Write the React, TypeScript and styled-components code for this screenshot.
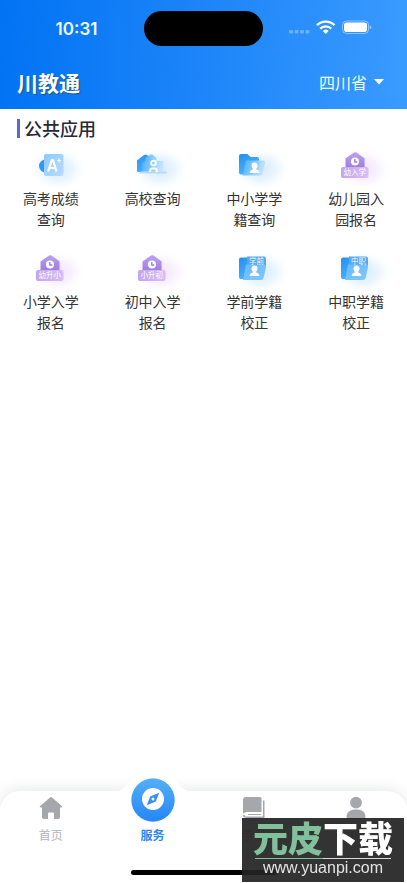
import React from "react";
import styled, { createGlobalStyle, css } from "styled-components";

const Global = createGlobalStyle`
  * { box-sizing: border-box; }
  body { margin: 0; background: #fff; font-family: "Inter", "Noto Sans CJK SC", sans-serif; }
  button, a { font: inherit; }
`;

const Screen = styled.div`
  min-height: 100vh;
  display: flex;
  flex-direction: column;
  background: #fff;
`;

const Header = styled.header`
  background: linear-gradient(93deg, #0273f4 0%, #1a83f8 45%, #3a9bff 100%);
  color: #fff;
`;

const StatusBar = styled.div`
  display: grid;
  grid-template-columns: 1fr 119px 1fr;
  align-items: center;
  padding-top: 11px;
  height: 46px;
`;

const Clock = styled.time`
  text-align: center;
  padding-left: 9px;
  font: 600 17px/24px "Inter", sans-serif;
  color: #eefaff;
`;

const Island = styled.div`
  height: 35px;
  border-radius: 18px;
  background: #000;
`;

const StatusIcons = styled.svg`
  justify-self: end;
  margin: 0 35px 4px 0;
  display: block;
`;

const TitleBar = styled.div`
  display: flex;
  align-items: center;
  justify-content: space-between;
  height: 63px;
  padding: 8px 23px 0 17px;
`;

const Brand = styled.h1`
  margin: 0;
  font: 700 21px/30px "Kaiti SC", "STKaiti", "Noto Sans CJK SC", serif;
  text-shadow: 1px 1px 1px #26527c;
`;

const Region = styled.button`
  display: flex;
  align-items: center;
  gap: 7px;
  padding: 0;
  border: 0;
  background: none;
  color: #f0fbff;
  font-family: "Noto Sans CJK SC", sans-serif;
  font-size: 16px;
  line-height: 24px;
  font-weight: 400;
`;

const Main = styled.main`
  flex: 1;
  padding-top: 7px;
`;

const SectionTitle = styled.h2`
  display: flex;
  align-items: center;
  gap: 4px;
  margin: 0 17px 5px;
  font: 500 18px/24px "Noto Sans CJK SC", sans-serif;
  color: #262a36;
  &::before {
    content: "";
    width: 3px;
    height: 19px;
    background: #5a68d6;
  }
`;

const AppGrid = styled.div`
  display: grid;
  grid-template-columns: repeat(4, 1fr);
  row-gap: 18px;
`;

const AppLink = styled.a`
  display: flex;
  flex-direction: column;
  align-items: center;
  gap: 3px;
  color: #333;
  text-decoration: none;
`;

const AppLabel = styled.span`
  width: 58px;
  text-align: center;
  font: 400 14px/21px "Noto Sans CJK SC", sans-serif;
`;

const AppIcon = styled.svg`
  display: block;
  width: 60px;
  height: 40px;
  overflow: visible;
`;

const TabBar = styled.nav`
  position: sticky;
  bottom: 0;
  display: grid;
  grid-template-columns: repeat(4, 1fr);
  height: 92px;
  border-radius: 20px 20px 0 0;
  background: #fff;
  box-shadow: 0 -2px 14px rgba(30, 35, 50, 0.1);
`;

const Tab = styled.a<{ $active?: boolean }>`
  position: relative;
  display: flex;
  flex-direction: column;
  align-items: center;
  gap: 6px;
  padding-top: 5px;
  color: #b4b5ba;
  text-decoration: none;
  font: 400 12px/18px "Noto Sans CJK SC", sans-serif;
  svg { display: block; }
  ${(p) => p.$active && css`
    color: #2788ef;
    font-weight: 700;
  `}
`;

const TabLabel = styled.span`
  position: relative;
`;

const ActiveSpace = styled.span`
  height: 24px;
`;

const Bump = styled.svg`
  position: absolute;
  top: -20px;
  left: 50%;
  margin-left: -42px;
`;

const HomeIndicator = styled.div`
  position: absolute;
  bottom: 8px;
  left: 50%;
  width: 146px;
  height: 5px;
  margin-left: -73px;
  border-radius: 3px;
  background: #000;
`;

const Watermark = styled.aside`
  position: fixed;
  right: 3px;
  bottom: 1px;
  width: 162px;
  height: 64px;
  display: flex;
  flex-direction: column;
  align-items: center;
  background: rgba(36, 36, 36, 0.93);
  color: #fff;
`;

const WatermarkName = styled.strong`
  height: 40px;
  font: 900 35px/38px "Noto Sans CJK SC", sans-serif;
  span { color: #82c09b; }
`;

const WatermarkRule = styled.div`
  width: 136px;
  height: 1px;
  background: linear-gradient(90deg, #82c09b 50%, #ddd 50%);
`;

const WatermarkUrl = styled.span`
  font: 400 16px/18px "Liberation Sans", sans-serif;
  color: #e3e3e3;
`;

type Kind = "grade" | "campus" | "folder" | "house" | "record";

const GradientDefs = styled.svg`
  position: absolute;
`;

const Gradients = () => (
  <GradientDefs width="0" height="0" aria-hidden="true">
    <defs>
      <radialGradient id="glowBlue">
        <stop offset="0" stopColor="#a8d5ff" stopOpacity="0.5" />
        <stop offset="0.5" stopColor="#c5e3ff" stopOpacity="0.36" />
        <stop offset="1" stopColor="#fff" stopOpacity="0" />
      </radialGradient>
      <radialGradient id="glowPurple">
        <stop offset="0" stopColor="#dcbcf9" stopOpacity="0.45" />
        <stop offset="0.5" stopColor="#ecdafc" stopOpacity="0.35" />
        <stop offset="1" stopColor="#fff" stopOpacity="0" />
      </radialGradient>
      <linearGradient id="deep" x1="0" y1="0" x2="0.6" y2="1">
        <stop offset="0" stopColor="#2390f2" />
        <stop offset="1" stopColor="#4cb6ff" />
      </linearGradient>
      <linearGradient id="glass" x1="0" y1="0" x2="1" y2="1">
        <stop offset="0" stopColor="#8cc9fc" />
        <stop offset="1" stopColor="#b9dcff" />
      </linearGradient>
      <linearGradient id="pane" x1="0" y1="0.4" x2="1" y2="0.6">
        <stop offset="0" stopColor="#58b5ff" />
        <stop offset="1" stopColor="#c9e6ff" />
      </linearGradient>
      <linearGradient id="record" x1="0" y1="0" x2="1" y2="1">
        <stop offset="0" stopColor="#62bafc" />
        <stop offset="1" stopColor="#86c6ff" />
      </linearGradient>
      <linearGradient id="violet" x1="0" y1="0" x2="0" y2="1">
        <stop offset="0" stopColor="#bda2ee" />
        <stop offset="1" stopColor="#9c7ce2" />
      </linearGradient>
      <linearGradient id="plate" x1="0" y1="0" x2="1" y2="0">
        <stop offset="0" stopColor="#c3a5ec" />
        <stop offset="1" stopColor="#d9bdf6" />
      </linearGradient>
      <linearGradient id="disc" x1="0" y1="0" x2="0" y2="1">
        <stop offset="0" stopColor="#52b0f8" />
        <stop offset="1" stopColor="#2686f4" />
      </linearGradient>
    </defs>
  </GradientDefs>
);

const Person = () => (
  <g fill="#fff">
    <path d="M31.500 17.500c2 0 3.100 1.400 3 3-.1 1.400-.6 2.300-1.200 3v1.200c2 .4 3 1.100 3 3.300h-9.600c0-2.200 1-2.900 3-3.300v-1.200c-.6-.7-1.100-1.600-1.200-3-.1-1.600 1-3 3-3z" />
  </g>
);

function Icon({ kind, tag }: { kind: Kind; tag?: string }) {
  const purple = kind === "house";
  return (
    <AppIcon viewBox="1 0 60 40" aria-hidden="true">
      <ellipse cx="38" cy="24" rx="30" ry="23" fill={purple ? "url(#glowPurple)" : "url(#glowBlue)"} />
      {kind === "grade" && (
        <>
          <circle cx="25.500" cy="21" r="6.500" fill="#289bf6" />
          <rect x="24" y="9" width="19.500" height="22" rx="2" fill="url(#glass)" />
          <path d="M28.200 26.500 31.700 15.200h1.300l3.500 11.300M29.600 23h5.500" fill="none" stroke="#fff" strokeWidth="2.200" />
          <path d="M39 13.500v4M37 15.500h4" stroke="#fff" strokeWidth="1.200" />
        </>
      )}
      {kind === "campus" && (
        <>
          <path d="M15 26V15.500L22 10q1.500-1 3 0L31 14v13H17q-2 0-2-1z" fill="url(#deep)" />
          <path d="M20.500 27V18l3-2v-3l5-3.500q1-.6 2 0l4 3.500v3h7V27z" fill="url(#pane)" opacity="0.92" />
          <rect x="18" y="26.500" width="27" height="2" rx="1" fill="#b7dbfb" />
          <circle cx="31.500" cy="18" r="2.400" fill="none" stroke="#fff" strokeWidth="1.800" />
          <path d="M28.200 27v-1.500q0-2 2-2h2.600q2 0 2 2V27" fill="none" stroke="#fff" strokeWidth="2" />
        </>
      )}
      {kind === "folder" && (
        <>
          <path d="M16 11q0-2 2-2h6.500l3 3H34q2 0 2 2v15.500H18q-2 0-2-2z" fill="url(#deep)" />
          <path d="M23 15.500h17.500q2 0 1.600 2l-2.300 11q-.4 2-2.400 2H19.500z" fill="url(#pane)" opacity="0.92" />
          <Person />
        </>
      )}
      {kind === "record" && (
        <>
          <path d="M16 11.500q0-2 2-2h7l2 2h9v19.500H18q-2 0-2-2z" fill="url(#deep)" />
          <path d="M24 8.500h17q2 0 2 2V17H24z" fill="#5aa6ec" />
          <path d="M23 16.500h18.500q2 0 1.600 2l-2.500 11.500q-.4 2-2.400 2H20z" fill="url(#record)" />
          <text x="33.500" y="15.600" fontSize="7.500" textAnchor="middle" fill="#eef8ff" fontFamily="Noto Sans CJK SC, sans-serif">{tag}</text>
          <Person />
        </>
      )}
      {kind === "house" && (
        <>
          <path d="M20.500 13.500 29 7.600q1.300-.8 2.600 0l8 5.900V23h-19.100z" fill="url(#violet)" />
          <circle cx="30" cy="16.500" r="4" fill="#fff" />
          <path d="M29.800 14v3h2.500" fill="none" stroke="#9a7be0" strokeWidth="1.300" />
          <rect x="16" y="22" width="27.500" height="11" rx="2" fill="url(#plate)" />
          <text x="29.700" y="30.300" fontSize="7.500" textAnchor="middle" fill="#fff" fontFamily="Noto Sans CJK SC, sans-serif">{tag}</text>
        </>
      )}
    </AppIcon>
  );
}

const apps: { label: string; kind: Kind; tag?: string }[] = [
  { label: "高考成绩查询", kind: "grade" },
  { label: "高校查询", kind: "campus" },
  { label: "中小学学籍查询", kind: "folder" },
  { label: "幼儿园入园报名", kind: "house", tag: "幼入学" },
  { label: "小学入学报名", kind: "house", tag: "幼升小" },
  { label: "初中入学报名", kind: "house", tag: "小升初" },
  { label: "学前学籍校正", kind: "record", tag: "学前" },
  { label: "中职学籍校正", kind: "record", tag: "中职" },
];

export default function App() {
  return (
    <Screen>
      <Global />
      <Gradients />
      <Header>
        <StatusBar>
          <Clock>10:31</Clock>
          <Island />
          <StatusIcons width="84" height="16" viewBox="0 0 84 16" fill="#fff" aria-hidden="true">
            <g opacity="0.3">
              <rect x="1" y="11" width="4" height="3.500" rx="1" />
              <rect x="6.500" y="11" width="4" height="3.500" rx="1" />
              <rect x="12" y="11" width="4" height="3.500" rx="1" />
              <rect x="17.500" y="11" width="4" height="3.500" rx="1" />
            </g>
            <g fill="none" stroke="#fff" strokeWidth="2.400">
              <path d="M29 6.200a12.500 12.500 0 0 1 17.500 0" />
              <path d="M32.200 9.600a8 8 0 0 1 11.100 0" />
            </g>
            <path d="M34.800 12a4.300 4.300 0 0 1 5.900 0l-2.950 3z" />
            <rect x="54.500" y="2" width="26" height="12.500" rx="4" fill="none" stroke="#fff" strokeOpacity="0.45" />
            <rect x="56" y="3.500" width="23" height="9.500" rx="2.800" />
            <path d="M81.700 6.300q1.600.7 1.600 2t-1.600 2z" opacity="0.5" />
          </StatusIcons>
        </StatusBar>
        <TitleBar>
          <Brand>川教通</Brand>
          <Region type="button">
            四川省
            <svg width="10" height="6" viewBox="0 0 10 6" aria-hidden="true">
              <path d="M0 0h10L5 5.500z" fill="#fff" />
            </svg>
          </Region>
        </TitleBar>
      </Header>
      <Main>
        <SectionTitle>公共应用</SectionTitle>
        <AppGrid>
          {apps.map((a) => (
            <AppLink key={a.label} href="#">
              <Icon kind={a.kind} tag={a.tag} />
              <AppLabel>{a.label}</AppLabel>
            </AppLink>
          ))}
        </AppGrid>
      </Main>
      <TabBar>
        <Tab href="#">
          <svg width="24" height="24" viewBox="0 0 24 24" fill="#a6a7ac" aria-hidden="true">
            <path d="M11 1.400q1-.8 2 0l10 8.900q.8.900-.3 1.200H21V21q0 2-2 2h-4v-5.500q0-1-1-1h-4q-1 0-1 1V23H5q-2 0-2-2v-9.500H1.300q-1.100-.3-.3-1.200z" />
          </svg>
          <TabLabel>首页</TabLabel>
        </Tab>
        <Tab href="#" $active>
          <Bump width="84" height="56" viewBox="0 0 84 56" aria-hidden="true">
            <path d="M0 21c10 0 13-4 18-10C30-3 54-3 66 11c5 6 8 10 18 10v35H0z" fill="#fff" />
            <circle cx="42" cy="29" r="21.700" fill="url(#disc)" />
            <circle cx="42" cy="28" r="11" fill="#fff" />
            <path d="M48.200 21.800 44.800 30.600 35.800 34.200 39.200 25.400z" fill="#378ff2" />
            <circle cx="42" cy="28" r="1.500" fill="#fff" />
          </Bump>
          <ActiveSpace />
          <TabLabel>服务</TabLabel>
        </Tab>
        <Tab href="#">
          <svg width="24" height="24" viewBox="0 0 24 24" fill="#a6a7ac" aria-hidden="true">
            <path d="M4 1h14q1.500 0 1.500 1.500V16H5q-2.500 0-4 1.500V4q0-3 3-3z" />
            <path d="M21 4.500h1.500V22H5q-4 0-4-3h1.500q0 1.500 2.500 1.500h16z" />
            <path d="M6 18h13v1H6z" />
          </svg>
          <TabLabel>学习</TabLabel>
        </Tab>
        <Tab href="#">
          <svg width="24" height="24" viewBox="0 0 24 24" fill="#a6a7ac" aria-hidden="true">
            <circle cx="12" cy="6.700" r="5.900" />
            <path d="M2.500 21c0-5 3.500-7.500 9.500-7.500s9.500 2.500 9.500 7.500q0 2-2 2h-15q-2 0-2-2z" />
          </svg>
          <TabLabel>我的</TabLabel>
        </Tab>
        <HomeIndicator />
      </TabBar>
      <Watermark>
        <WatermarkName><span>元皮</span>下载</WatermarkName>
        <WatermarkRule />
        <WatermarkUrl>www.yuanpi.com</WatermarkUrl>
      </Watermark>
    </Screen>
  );
}
